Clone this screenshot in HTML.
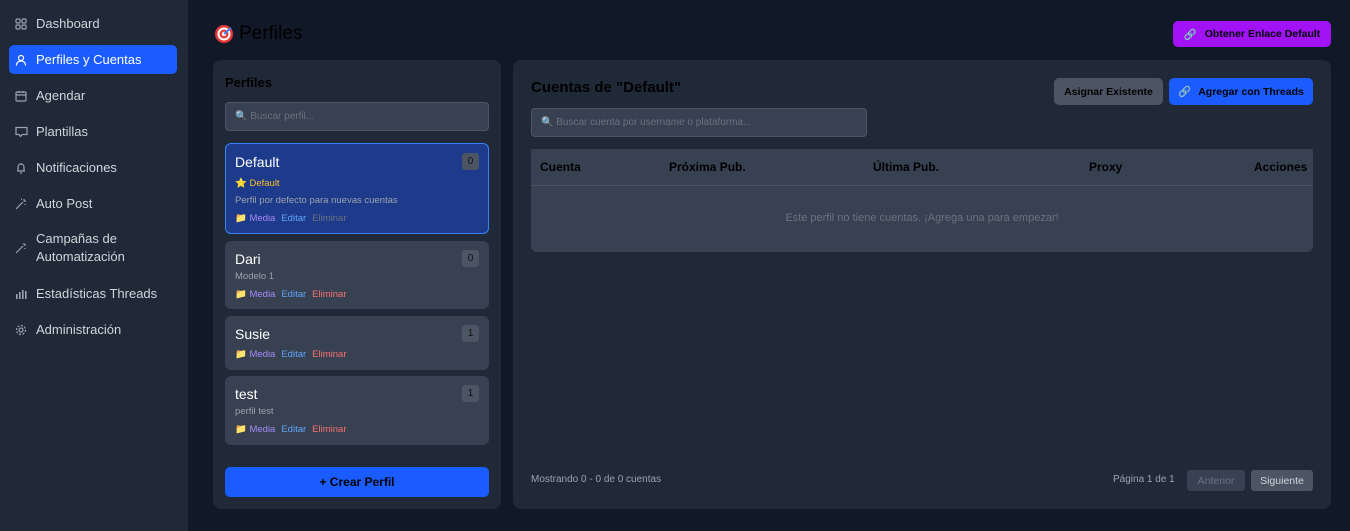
<!DOCTYPE html>
<html><head><meta charset="utf-8"><style>
*{box-sizing:border-box;margin:0;padding:0}
body{width:1350px;height:531px;background:#111827;font-family:"Liberation Sans","DejaVu Sans",sans-serif;position:relative;overflow:hidden;color:#d1d5db}
.a{position:absolute}
.side{left:0;top:0;width:188px;height:531px;background:#1f2937}
.nav{position:absolute;left:9px;width:168px;height:29px;border-radius:5px;font-size:13px;color:#d1d5db;display:flex;align-items:center;padding-left:27px}
.nav svg{position:absolute;left:6px;top:50%;transform:translateY(-50%)}
.act{background:#1a5cff;color:#fff}
.panel{background:#1f2937;border-radius:8px}
.card{position:absolute;left:225px;width:264px;background:#374151;border-radius:6px}
.card .n{position:absolute;left:10px;top:12px;font-size:14px;color:#fff}
.badge{position:absolute;right:10px;top:9px;width:17px;height:17px;border-radius:3px;background:#4b5563;color:#111;font-size:10px;text-align:center;line-height:17px}
.sm{position:absolute;left:10px;font-size:9.5px;color:#9ca3af}
.links{position:absolute;left:10px;font-size:9.5px}
.links span{margin-right:6px}
.btn{position:absolute;border-radius:5px;font-size:10.5px;font-weight:bold;color:#000;display:flex;align-items:center;justify-content:center;white-space:nowrap}
.th{position:absolute;top:160px;font-size:12px;font-weight:bold;color:#000}
.inp{position:absolute;border:1px solid #4b5563;background:#374151;border-radius:4px;font-size:10px;color:#6b7280;display:flex;align-items:center;padding-left:9px}
</style></head><body>
<div class="a side">
<div class="nav" style="top:9px"><svg width="12" height="12" viewBox="0 0 12 12" fill="none" stroke="#9ca3af" stroke-width="1.2"><rect x="1" y="1" width="4" height="4" rx="1"/><rect x="7" y="1" width="4" height="4" rx="1"/><rect x="1" y="7" width="4" height="4" rx="1"/><rect x="7" y="7" width="4" height="4" rx="1"/></svg>Dashboard</div>
<div class="nav act" style="top:45px"><svg width="12" height="12" viewBox="0 0 12 12" fill="none" stroke="#fff" stroke-width="1.2"><circle cx="6" cy="4" r="2.5"/><path d="M1.5 11.5c0-3 2-4.5 4.5-4.5s4.5 1.5 4.5 4.5"/></svg>Perfiles y Cuentas</div>
<div class="nav" style="top:81px"><svg width="12" height="12" viewBox="0 0 12 12" fill="none" stroke="#9ca3af" stroke-width="1.2"><rect x="1" y="2" width="10" height="9" rx="1"/><path d="M1 5h10M4 1v2M8 1v2"/></svg>Agendar</div>
<div class="nav" style="top:117px"><svg width="13" height="12" viewBox="0 0 13 12" fill="none" stroke="#9ca3af" stroke-width="1.2"><path d="M1 1.5h11v7H7l-1.5 2-1.5-2H1z"/></svg>Plantillas</div>
<div class="nav" style="top:153px"><svg width="12" height="12" viewBox="0 0 12 12" fill="none" stroke="#9ca3af" stroke-width="1.2"><path d="M3 9V5a3 3 0 016 0v4zM2 9h8M5 11h2M6 1v1"/></svg>Notificaciones</div>
<div class="nav" style="top:189px"><svg width="12" height="12" viewBox="0 0 12 12" fill="none" stroke="#9ca3af" stroke-width="1.2"><path d="M1 11l7-7M9 1v2M11 3H9M10 6v1M6 1h1"/></svg>Auto Post</div>
<div class="nav" style="top:230px;height:36px;line-height:18px"><svg width="12" height="12" viewBox="0 0 12 12" fill="none" stroke="#9ca3af" stroke-width="1.2"><path d="M1 11l7-7M9 1v2M11 3H9M10 6v1"/></svg>Campañas de<br>Automatización</div>
<div class="nav" style="top:279px"><svg width="12" height="12" viewBox="0 0 12 12" fill="#9ca3af"><rect x="1" y="6" width="1.6" height="5"/><rect x="4" y="4" width="1.6" height="7"/><rect x="7" y="2" width="1.6" height="9"/><rect x="10" y="3" width="1.6" height="8"/></svg>Estadísticas Threads</div>
<div class="nav" style="top:315px"><svg width="12" height="12" viewBox="0 0 12 12" fill="none" stroke="#9ca3af" stroke-width="1.2"><circle cx="6" cy="6" r="2"/><circle cx="6" cy="6" r="4.5" stroke-dasharray="2 1.5"/></svg>Administración</div>
</div>

<div class="a" style="left:214px;top:23px;font-size:19px;color:#000;display:flex;align-items:center"><svg width="20" height="20" viewBox="0 0 20 20" style="margin-right:5px"><circle cx="10" cy="10" r="9" fill="#e53935"/><circle cx="10" cy="10" r="6.5" fill="#fff"/><circle cx="10" cy="10" r="4.5" fill="#e53935"/><circle cx="10" cy="10" r="2.2" fill="#fff"/><path d="M10 10l7-6" stroke="#3b82f6" stroke-width="2"/></svg>Perfiles</div>
<div class="btn" style="left:1173px;top:21px;width:158px;height:26px;background:#a112f7"><span style="color:#7dd3fc;margin-right:8px">🔗</span>Obtener Enlace Default</div>

<div class="a panel" style="left:213px;top:60px;width:288px;height:449px"></div>
<div class="a" style="left:225px;top:75px;font-size:13px;font-weight:bold;color:#000">Perfiles</div>
<div class="inp" style="left:225px;top:102px;width:264px;height:29px">🔍 Buscar perfil...</div>

<div class="card" style="top:143px;height:91px;background:#1e3a8a;border:1px solid #3b82f6">
<div class="n" style="top:10px;left:9px">Default</div><div class="badge" style="top:9px;right:9px">0</div>
<div class="sm" style="top:34px;left:9px;color:#fbbf24">⭐ Default</div>
<div class="sm" style="top:51px;left:9px">Perfil por defecto para nuevas cuentas</div>
<div class="links" style="top:69px;left:9px"><span style="color:#a78bfa">📁 Media</span><span style="color:#60a5fa">Editar</span><span style="color:#6b7280">Eliminar</span></div></div>

<div class="card" style="top:241px;height:68px"><div class="n" style="top:10px">Dari</div><div class="badge">0</div>
<div class="sm" style="top:30px">Modelo 1</div>
<div class="links" style="top:48px"><span style="color:#a78bfa">📁 Media</span><span style="color:#60a5fa">Editar</span><span style="color:#f87171">Eliminar</span></div></div>

<div class="card" style="top:316px;height:54px"><div class="n" style="top:10px">Susie</div><div class="badge">1</div>
<div class="links" style="top:33px"><span style="color:#a78bfa">📁 Media</span><span style="color:#60a5fa">Editar</span><span style="color:#f87171">Eliminar</span></div></div>

<div class="card" style="top:376px;height:69px"><div class="n" style="top:10px">test</div><div class="badge">1</div>
<div class="sm" style="top:30px">perfil test</div>
<div class="links" style="top:48px"><span style="color:#a78bfa">📁 Media</span><span style="color:#60a5fa">Editar</span><span style="color:#f87171">Eliminar</span></div></div>

<div class="btn" style="left:225px;top:467px;width:264px;height:30px;background:#1a5cff;font-size:12px">+ Crear Perfil</div>

<div class="a panel" style="left:513px;top:60px;width:818px;height:449px"></div>
<div class="a" style="left:531px;top:79px;font-size:15px;font-weight:bold;color:#000">Cuentas de "Default"</div>
<div class="btn" style="left:1054px;top:78px;width:109px;height:27px;background:#4b5563">Asignar Existente</div>
<div class="btn" style="left:1169px;top:78px;width:144px;height:27px;background:#1a5cff"><span style="color:#7dd3fc;margin-right:7px">🔗</span>Agregar con Threads</div>
<div class="inp" style="left:531px;top:108px;width:336px;height:29px">🔍 Buscar cuenta por username o plataforma...</div>
<div class="a" style="left:531px;top:149px;width:782px;height:103px;background:#374151;border-radius:0 0 6px 6px"></div>
<div class="a" style="left:531px;top:185px;width:782px;height:1px;background:#4b5563"></div>
<div class="th" style="left:540px">Cuenta</div>
<div class="th" style="left:669px">Próxima Pub.</div>
<div class="th" style="left:873px">Última Pub.</div>
<div class="th" style="left:1089px">Proxy</div>
<div class="th" style="left:1254px">Acciones</div>
<div class="a" style="left:531px;top:212px;width:782px;text-align:center;font-size:11px;color:#6b7280">Este perfil no tiene cuentas. ¡Agrega una para empezar!</div>
<div class="a" style="left:531px;top:474px;font-size:10px;color:#9ca3af">Mostrando 0 - 0 de 0 cuentas</div>
<div class="a" style="left:1113px;top:474px;font-size:10px;color:#9ca3af">Página 1 de 1</div>
<div class="btn" style="left:1187px;top:470px;width:58px;height:21px;background:#374151;color:#6b7280;font-weight:normal;font-size:10.5px;border-radius:3px">Anterior</div>
<div class="btn" style="left:1251px;top:470px;width:62px;height:21px;background:#4b5563;color:#d1d5db;font-weight:normal;font-size:10.5px;border-radius:3px">Siguiente</div>
</body></html>
